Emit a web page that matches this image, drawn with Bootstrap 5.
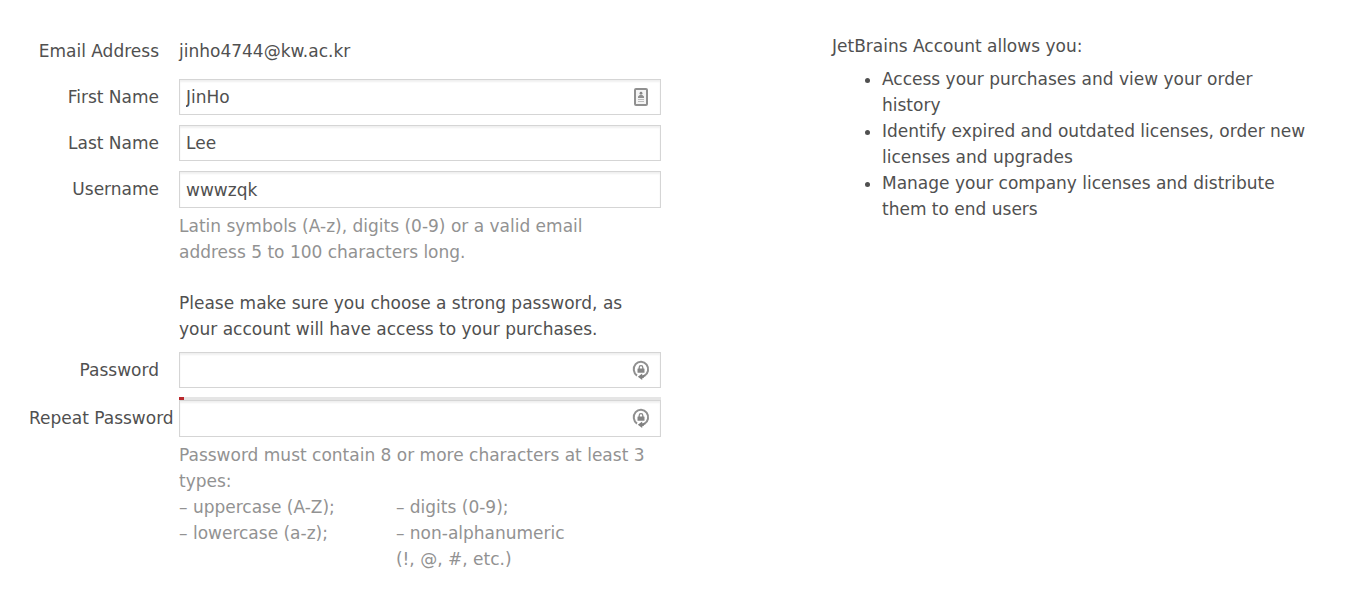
<!DOCTYPE html>
<html lang="en">
<head>
<meta charset="utf-8">
<meta name="viewport" content="width=device-width, initial-scale=1">
<title>JetBrains Account</title>
<link href="https://cdn.jsdelivr.net/npm/bootstrap@5.3.0/dist/css/bootstrap.min.css" rel="stylesheet">
<style>
  body { font-family: "DejaVu Sans", sans-serif; font-size: 17px; line-height: 26px; color: #505050; background: #fff; }
  .signup { padding: 33px 22px 24px 29px; }
  .benefits { padding: 33px 56px 24px 149px; }
  .benefits ul { padding-left: 50px; margin: 7px 0 0; }
  .field { display: grid; grid-template-columns: 130px minmax(0, 1fr); column-gap: 20px; margin-bottom: 10px; }
  .field-label { text-align: right; white-space: nowrap; line-height: 36px; }
  .static-value { line-height: 36px; }
  .field .form-control { height: 36px; padding: 0 6px; font-size: 17px; line-height: 26px; color: #505050; border: 1px solid #d5d5d5; border-radius: 0; box-shadow: inset 0 2px 2px #f0f0f0; }
  .field .has-icon { padding-right: 40px; }
  .field .tall-input { height: 37px; }
  .field-icon { position: absolute; right: 10px; top: 8px; width: 20px; height: 20px; }
  .hint { color: #929292; padding-top: 5px; }
  .advice { margin-top: 25px; margin-bottom: 10px; }
  .beside-fields { margin-left: 150px; }
  .strength { height: 3px; background: #e5e5e5; margin-top: 9px; }
  .strength-bar { height: 3px; background: #b9282d; }
  .types { display: grid; grid-template-columns: 45% 1fr; }
</style>
</head>
<body>
<svg class="d-none" aria-hidden="true">
  <symbol id="lock-cycle" viewBox="0 0 20 20">
    <path d="M6 15.6A7.2 7.6 0 1 1 13.4 15.9" fill="none" stroke="#909090" stroke-width="2"/>
    <path d="M13.8 15.4l-2.6 1.4" stroke="#808080" stroke-width="2"/>
    <path d="M6.8 16.8l4.4-3.2v2l2.4-.6-1 3-1.4.2V20z" fill="#808080"/>
    <path d="M8.2 9V7.4a1.8 1.8 0 0 1 3.6 0V9" fill="none" stroke="#888" stroke-width="1.3"/>
    <rect x="6.5" y="8.4" width="7" height="4.4" rx=".5" fill="#858585"/>
  </symbol>
</svg>
<main class="container-fluid p-0">
  <div class="row g-0">
    <form class="col-6 signup">
      <div class="field">
        <span class="field-label">Email Address</span>
        <span class="static-value">jinho4744@kw.ac.kr</span>
      </div>
      <div class="field">
        <label class="field-label" for="first">First Name</label>
        <div class="position-relative">
          <input class="form-control has-icon" id="first" type="text" value="JinHo">
          <svg class="field-icon" viewBox="0 0 20 20" aria-hidden="true">
            <rect x="4" y="2" width="12" height="16" rx="1" fill="#f4f4f4" stroke="#909090" stroke-width="2"/>
            <circle cx="10" cy="6.2" r="1.4" fill="#858585"/>
            <path d="M7 11V9.5l2-1.7h2l2 1.7V11z" fill="#909090"/>
            <path d="M7 12.5h6M7 14.5h6" stroke="#bbb" stroke-width="1"/>
          </svg>
        </div>
      </div>
      <div class="field">
        <label class="field-label" for="last">Last Name</label>
        <input class="form-control" id="last" type="text" value="Lee">
      </div>
      <div class="field mb-0">
        <label class="field-label" for="user">Username</label>
        <input class="form-control tall-input" id="user" type="text" value="wwwzqk">
      </div>
      <div class="beside-fields hint pe-3">Latin symbols (A-z), digits (0-9) or a valid email address 5 to 100 characters long.</div>
      <p class="beside-fields advice">Please make sure you choose a strong password, as your account will have access to your purchases.</p>
      <div class="field mb-0">
        <label class="field-label" for="pass">Password</label>
        <div class="position-relative">
          <input class="form-control has-icon" id="pass" type="password">
          <svg class="field-icon" aria-hidden="true"><use href="#lock-cycle"/></svg>
          <div class="strength"><div class="strength-bar" style="width:1%"></div></div>
        </div>
      </div>
      <div class="field mb-0">
        <label class="field-label" for="repeat">Repeat Password</label>
        <div class="position-relative">
          <input class="form-control has-icon tall-input" id="repeat" type="password">
          <svg class="field-icon" aria-hidden="true"><use href="#lock-cycle"/></svg>
        </div>
      </div>
      <div class="beside-fields hint">
        Password must contain 8 or more characters at least 3 types:
        <div class="types">
          <div>– uppercase (A-Z);<br>– lowercase (a-z);</div>
          <div>– digits (0-9);<br>– non-alphanumeric<br>(!, @, #, etc.)</div>
        </div>
      </div>
    </form>
    <section class="col-6 benefits">
      <div>JetBrains Account allows you:</div>
      <ul>
        <li>Access your purchases and view your order history</li>
        <li>Identify expired and outdated licenses, order new licenses and upgrades</li>
        <li>Manage your company licenses and distribute them to end users</li>
      </ul>
    </section>
  </div>
</main>
<script src="https://cdn.jsdelivr.net/npm/bootstrap@5.3.0/dist/js/bootstrap.bundle.min.js"></script>
</body>
</html>
